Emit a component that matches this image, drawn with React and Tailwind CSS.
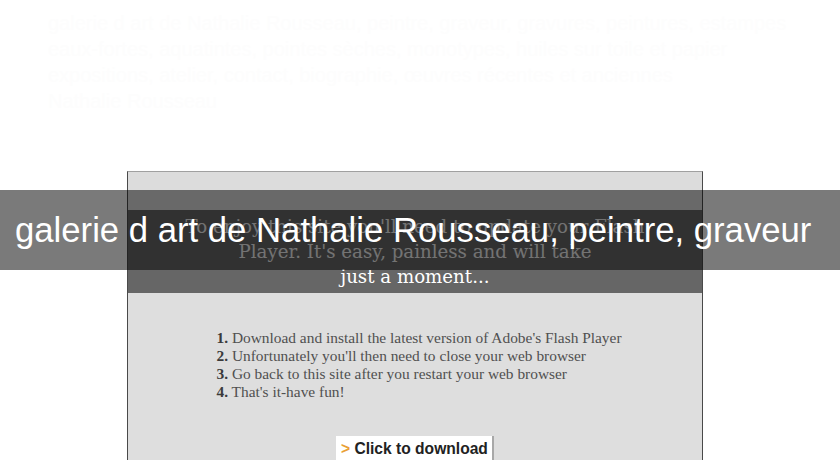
export default function App() {
  const steps = [
    "Download and install the latest version of Adobe's Flash Player",
    "Unfortunately you'll then need to close your web browser",
    "Go back to this site after you restart your web browser",
    "That's it-have fun!",
  ]

  return (
    <div className="relative w-[840px] h-[460px] overflow-hidden bg-white">
      {/* nearly invisible page text behind */}
      <div className="h-[171px] pl-[48px] pr-[8px] pt-[10px] text-[20px] leading-[26px] text-[#fdfdfd] font-['Liberation_Sans',sans-serif]">
        <p>galerie d art de Nathalie Rousseau, peintre, graveur, gravures, peintures, estampes</p>
        <p>eaux-fortes, aquatintes, pointes sèches, monotypes, huiles sur toile et papier</p>
        <p>expositions, atelier, contact, biographie, œuvres récentes et anciennes</p>
        <p>Nathalie Rousseau</p>
      </div>

      <div className="ml-[127px] w-[576px] border-x border-x-[#4a4a4a] border-t border-t-[#a0a0a0] bg-[#dedede]">
        <div className="h-[38px] bg-[#dcdcdc]" />
        <div className="h-[83px] bg-[#666666] pt-[4px] text-center text-[18.2px] leading-[25px] text-[#f0f0f0] font-['DejaVu_Serif',serif]">
          <p>To enjoy this site you'll need to update your Flash</p>
          <p>Player. It's easy, painless and will take</p>
          <p className="text-white">just a moment...</p>
        </div>
        <div className="flex flex-col items-center pt-[36px]">
          <ol className="ml-[8px] text-[15.4px] leading-[18px] text-[#505050] font-['Liberation_Serif',serif]">
            {steps.map((s, i) => (
              <li key={i}>
                <span className="font-bold text-[#3a3a3a]">{i + 1}.</span> {s}
              </li>
            ))}
          </ol>
          <div className="mt-[35px] h-[30px] w-[158px] bg-white border-r-2 border-r-[#a8a8a8] pl-[5px] pt-[3px] text-[15.6px] leading-[20px] font-bold text-[#222] font-['Liberation_Sans',sans-serif]">
            <span className="text-[#e9a035]">&gt;</span> Click to download
          </div>
        </div>
      </div>

      {/* title overlay band */}
      <div className="absolute left-0 top-[190px] w-[840px] h-[80px] bg-black/[0.52] flex items-center pl-[15px]">
        <span className="text-white text-[34.7px] leading-[38px] font-['Liberation_Sans',sans-serif] whitespace-nowrap">
          galerie d art de Nathalie Rousseau, peintre, graveur
        </span>
      </div>
    </div>
  )
}
